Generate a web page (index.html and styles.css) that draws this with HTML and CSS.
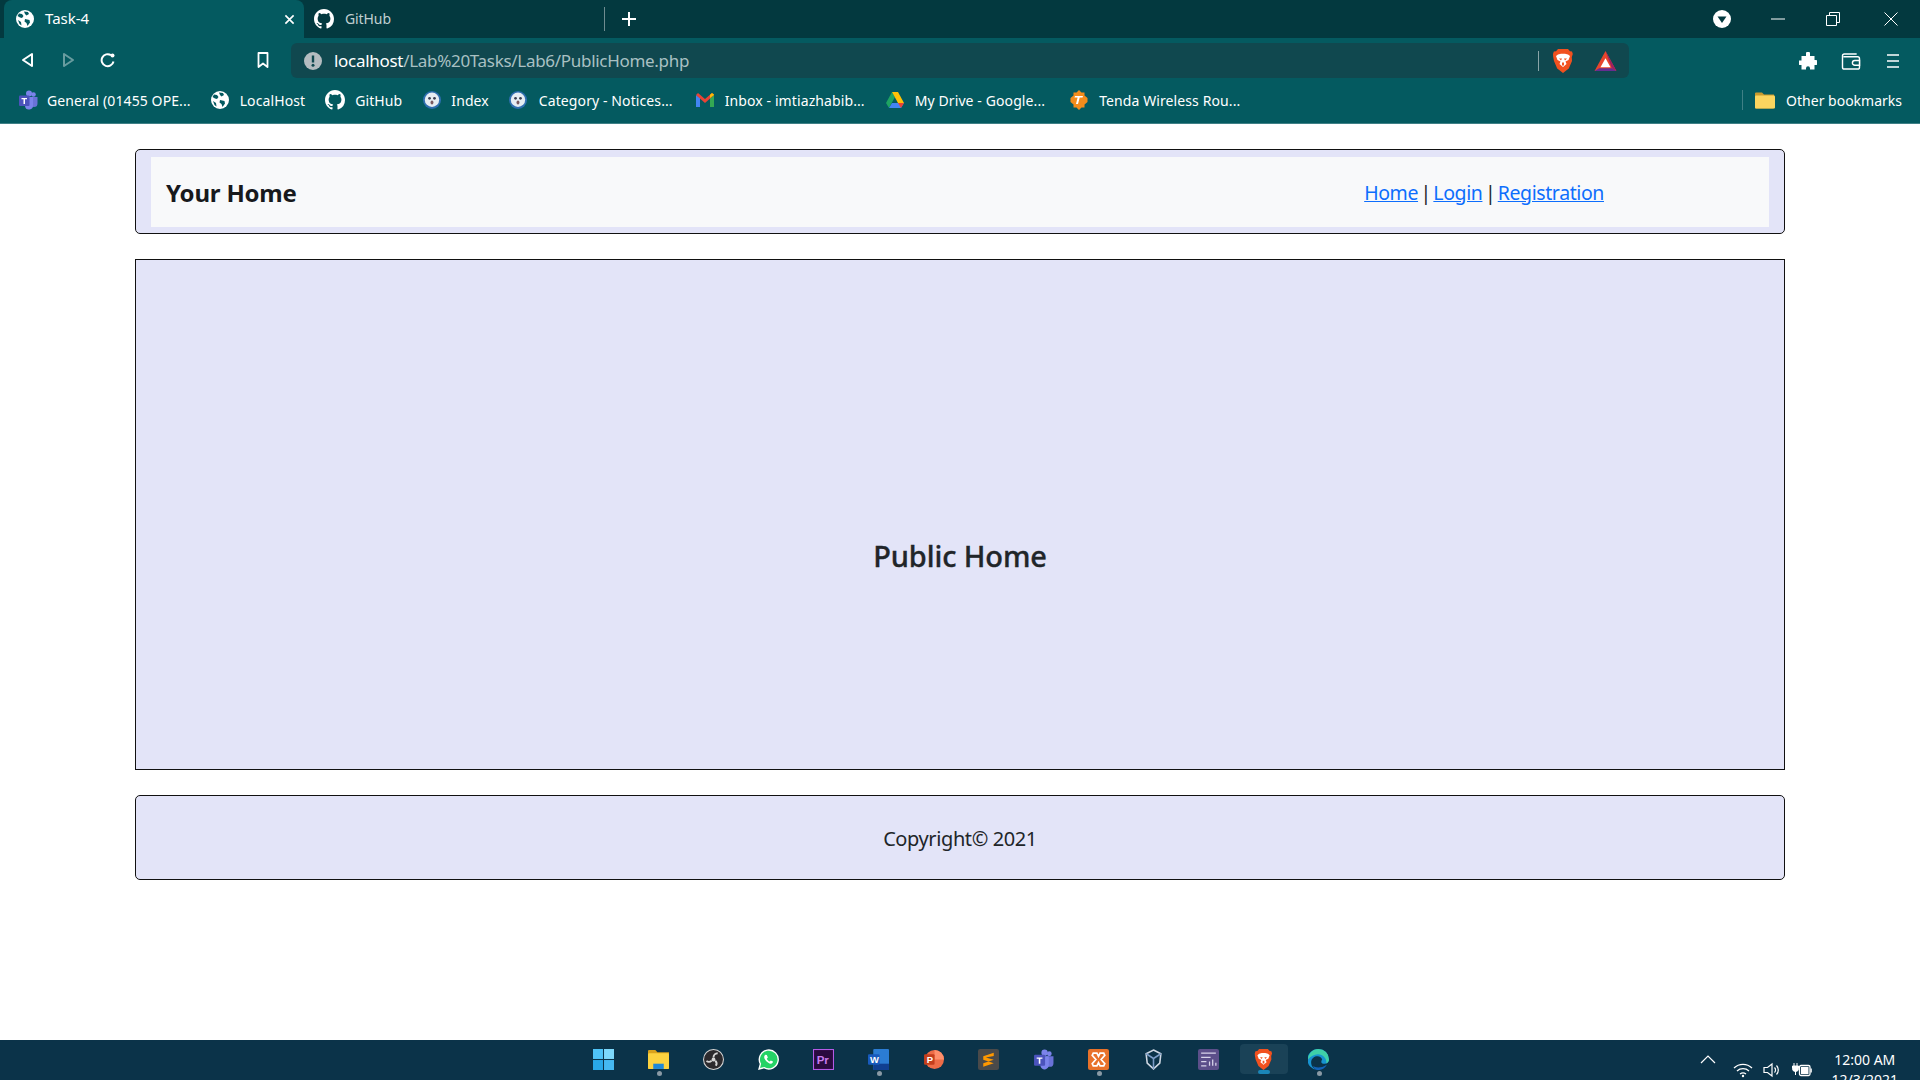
FILE: index.html
```html
<!DOCTYPE html>
<html lang="en">
<head>
  <meta charset="UTF-8" />
  <title>Task-4</title>
  <link rel="stylesheet" href="styles.css">
</head>
<body>
  <svg class="defs" width="0" height="0">
    <symbol id="globe" viewBox="0 0 18 18">
      <circle cx="9" cy="9" r="9" fill="#fff"/>
      <path d="M3 3.500l3 .5 1.500 2L6 8 4 7.500 1.500 6zM8 1.500l4 .5 1 2-2.500 1.500L9 4zM9 9l4.500 1 .5 2.500-2.500 3.500-1-3-2-1.500zM2 10l3 2 .5 3.500-2-1.500z" fill="#045a60"/>
    </symbol>
    <symbol id="github" viewBox="0 0 16 16">
      <path fill="#fff" d="M8 0C3.580 0 0 3.580 0 8c0 3.540 2.290 6.530 5.470 7.590.4.070.55-.17.55-.38 0-.19-.01-.82-.01-1.490-2.010.37-2.530-.49-2.690-.94-.09-.23-.48-.94-.82-1.130-.28-.15-.68-.52-.01-.53.63-.01 1.080.58 1.230.82.720 1.210 1.870.87 2.330.66.070-.52.280-.87.510-1.070-1.780-.2-3.640-.89-3.640-3.950 0-.87.310-1.590.820-2.150-.08-.2-.36-1.020.08-2.120 0 0 .67-.21 2.200.82.640-.18 1.320-.27 2-.27s1.360.09 2 .27c1.530-1.040 2.200-.82 2.200-.82.440 1.100.160 1.920.080 2.120.51.560.82 1.270.82 2.150 0 3.070-1.870 3.750-3.650 3.950.29.250.54.730.54 1.480 0 1.070-.01 1.930-.01 2.200 0 .21.150.46.550.38A8.010 8.010 0 0 0 16 8c0-4.420-3.580-8-8-8z"/>
    </symbol>
    <symbol id="ghost" viewBox="0 0 16 16">
      <circle cx="8" cy="8" r="8" fill="#2f6fb0"/>
      <circle cx="8" cy="7.800" r="6.400" fill="#e6edf2"/>
      <circle cx="5.800" cy="6.500" r="1.200" fill="#3a3f50"/><circle cx="10.200" cy="6.500" r="1.200" fill="#3a3f50"/>
      <ellipse cx="8" cy="10.300" rx="1.300" ry="1.800" fill="#7a5a60"/>
    </symbol>
    <symbol id="teams" viewBox="0 0 20 20">
      <circle cx="15.500" cy="4.500" r="2.300" fill="#7b83eb"/>
      <circle cx="11" cy="3.500" r="3" fill="#7b83eb"/>
      <path d="M12 7h7.500v6.500a3.500 3.500 0 0 1-7 0z" fill="#6a72d8"/>
      <path d="M6 7h9v8a4 4 0 0 1-8 1z" fill="#7b83eb"/>
      <rect x="1" y="5.500" width="10.500" height="10.500" rx="1" fill="#4b53bc"/>
      <path d="M3.500 8h5.500v1.300H7v4.700H5.500V9.300h-2z" fill="#fff"/>
    </symbol>
    <symbol id="brave" viewBox="0 0 20 24">
      <path d="M5 0h10l2 2.200 2 .3.800 2.500-1 3L19 12l-3.200 7.500L10 24l-5.800-4.500L1 12 .2 8 0 5l.8-2.500 2.200-.3z" fill="#f1511f"/>
      <path d="M5 5.500l3-.8h4l3 .8 2 1.500-1.500 4-3 1.500 1 2.500-3.500 3-3.500-3 1-2.500-3-1.500L3 7z" fill="#fff"/>
      <path d="M6 9.500h3l-1 2zM11 9.500h3l-2 2zM9 13.500h2v3H9z" fill="#f1511f"/>
    </symbol>
  </svg>

  <div class="tabstrip">
    <div class="tab tab-active">
      <svg class="ico18"><use href="#globe"/></svg>
      <span class="tab-title">Task-4</span>
      <svg class="tab-close" viewBox="0 0 12 12"><path d="M1.500 1.500l9 9M10.500 1.500l-9 9" stroke="#fff" stroke-width="1.800"/></svg>
    </div>
    <div class="tab">
      <svg class="ico20"><use href="#github"/></svg>
      <span class="tab-title tab-dim">GitHub</span>
    </div>
    <div class="tab-sep"></div>
    <svg class="tab-new" viewBox="0 0 16 16"><path d="M8 1v14M1 8h14" stroke="#fff" stroke-width="2"/></svg>
    <div class="win-controls">
      <svg class="win-drop" viewBox="0 0 18 18"><circle cx="9" cy="9" r="9" fill="#fff"/><path d="M4.500 6.500h9L9 13z" fill="#03393f"/></svg>
      <svg class="win-btn" viewBox="0 0 14 14"><path d="M0 7h14" stroke="#fff"/></svg>
      <svg class="win-btn" viewBox="0 0 14 14"><path d="M.5 3.500h10v10H.5zM3.500 3.500V.5h10v10h-3" stroke="#fff" fill="none"/></svg>
      <svg class="win-btn" viewBox="0 0 14 14"><path d="M.5.5l13 13M13.500.5l-13 13" stroke="#fff"/></svg>
    </div>
  </div>

  <div class="toolbar">
    <svg class="nav-btn" viewBox="0 0 16 16"><path d="M12 2v12L3 8z" fill="none" stroke="#fff" stroke-width="2" stroke-linejoin="round"/></svg>
    <svg class="nav-btn nav-off" viewBox="0 0 16 16"><path d="M4 2v12l9-6z" fill="none" stroke="#fff" stroke-width="2" stroke-linejoin="round"/></svg>
    <svg class="nav-btn" viewBox="0 0 16 16"><path d="M13.500 9.500A6 6 0 1 1 11 3.200" fill="none" stroke="#fff" stroke-width="2"/><circle cx="12.500" cy="3.500" r="2" fill="#fff"/></svg>
    <svg class="nav-mark" viewBox="0 0 12 16"><path d="M1.500 1h9v14L6 11.500 1.500 15z" fill="none" stroke="#fff" stroke-width="1.800" stroke-linejoin="round"/></svg>
    <div class="omnibox">
      <svg class="ico18 info" viewBox="0 0 18 18"><circle cx="9" cy="9" r="9" fill="#b4bcc0"/><path d="M9 3.500v7" stroke="#10484f" stroke-width="2.400"/><circle cx="9" cy="13.300" r="1.500" fill="#10484f"/></svg>
      <span class="url"><span class="url-host">localhost</span>/Lab%20Tasks/Lab6/PublicHome.php</span>
      <div class="omni-sep"></div>
      <svg class="omni-brave"><use href="#brave"/></svg>
      <svg class="omni-bat" viewBox="0 0 24 22"><path d="M12 0l12 22H0z" fill="#e8452c"/><path d="M12 0l12 22-5-3z" fill="#9e1f63"/><path d="M0 22l5-3h14l5 3z" fill="#662d91"/><path d="M12 8l5.500 10h-11z" fill="#fff"/></svg>
    </div>
    <svg class="tool-ext" viewBox="0 0 18 18"><path d="M7 1.500a2 2 0 0 1 4 0V4h4.500v4h1a2.400 2.400 0 0 1 0 5h-1v4.500H11v-1.300a2 2 0 0 0-4 0v1.300H2.500V13H1.200a2.300 2.300 0 0 1 0-4.600h1.300V4H7z" fill="#fff"/></svg>
    <svg class="tool-wallet" viewBox="0 0 20 18"><path d="M16 1H3a2 2 0 0 0-2 2v12a2 2 0 0 0 2 2h14a2 2 0 0 0 2-2V6a2 2 0 0 0-2-2H2" fill="none" stroke="#fff" stroke-width="1.500"/><path d="M19 8h-5a2 2 0 0 0 0 5h5z" fill="#045a60" stroke="#fff" stroke-width="1.500"/></svg>
    <svg class="tool-menu" viewBox="0 0 12 16"><path d="M0 2h12M0 8h12M0 14h12" stroke="#fff" stroke-width="1.600"/></svg>
  </div>

  <div class="bookmarks">
    <a class="bm bm-teams"><svg class="ico20"><use href="#teams"/></svg>General (01455 OPE...</a>
    <a class="bm bm-host"><svg class="ico18"><use href="#globe"/></svg>LocalHost</a>
    <a class="bm bm-git"><svg class="ico20"><use href="#github"/></svg>GitHub</a>
    <a class="bm bm-index"><svg class="ico18"><use href="#ghost"/></svg>Index</a>
    <a class="bm bm-cat"><svg class="ico18"><use href="#ghost"/></svg>Category - Notices...</a>
    <a class="bm bm-mail"><svg class="ico18" viewBox="0 0 18 14"><path d="M0 2v12h4V5z" fill="#4285f4"/><path d="M14 5v9h4V2z" fill="#34a853"/><path d="M0 2l2-2 7 6 7-6 2 2-9 8z" fill="#ea4335"/><path d="M14 5l4-3v-.5L16 0l-2 1.700z" fill="#fbbc04"/></svg>Inbox - imtiazhabib...</a>
    <a class="bm bm-drive"><svg class="ico18" viewBox="0 0 18 16"><path d="M6 0L0 11l3 5 6-11z" fill="#1ea362"/><path d="M6 0h6l6 11h-6z" fill="#ffc107"/><path d="M3 16l3-5h12l-3 5z" fill="#4285f4"/><path d="M12 11h6l-3 5z" fill="#ea4335"/></svg>My Drive - Google...</a>
    <a class="bm bm-tenda"><svg class="ico20" viewBox="0 0 20 20"><path d="M10 0l2.500 2.500h3v3L18.500 8v4l-3 2.500v3h-3L10 20l-2.500-2.500h-3v-3L1.500 12V8l3-2.500v-3h3z" fill="#f28c1c"/><path d="M6 6h8l-.5 1.500h-2.800L9 14H7l1.600-6.500H5.500z" fill="#fff"/></svg>Tenda Wireless Rou...</a>
    <div class="bm-sep"></div>
    <a class="bm bm-other"><svg class="ico20" viewBox="0 0 20 17"><path d="M0 2a1 1 0 0 1 1-1h6l2 2h10v13a1 1 0 0 1-1 1H1a1 1 0 0 1-1-1z" fill="#c99a2e"/><rect y="4" width="20" height="13" rx="1" fill="#fbd55f"/></svg>Other bookmarks</a>
  </div>

  <div class="page">
    <div class="box head-box">
      <div class="head-inner">
        <span class="brand">Your Home</span>
        <span class="links"><a href="#">Home</a> | <a href="#">Login</a> | <a href="#">Registration</a></span>
      </div>
    </div>
    <div class="main-box">
      <h2>Public Home</h2>
    </div>
    <div class="box foot-box">Copyright© 2021</div>
  </div>

  <div class="taskbar">
    <div class="tb-icons">
      <div class="tb-item"><svg class="tb-ico" viewBox="0 0 20 20"><rect width="9.500" height="9.500" fill="#4fc3f7"/><rect x="10.500" width="9.500" height="9.500" fill="#7dd8fb"/><rect y="10.500" width="9.500" height="9.500" fill="#29a8e8"/><rect x="10.500" y="10.500" width="9.500" height="9.500" fill="#45b9f2"/></svg></div>
      <div class="tb-item tb-open"><svg class="tb-ico" viewBox="0 0 20 20"><path d="M0 2a1 1 0 0 1 1-1h6l2 2h11v15a1 1 0 0 1-1 1H1a1 1 0 0 1-1-1z" fill="#d9a21c"/><rect y="4" width="20" height="15" rx="1" fill="#fcd23f"/><rect x="5" y="14" width="10" height="5" fill="#1e88d8"/></svg></div>
      <div class="tb-item"><svg class="tb-ico" viewBox="0 0 20 20"><circle cx="10" cy="10" r="9.500" fill="#2c2a2d" stroke="#d5d5d5"/><circle cx="10" cy="10" r="1.800" fill="#d5d5d5"/><path d="M10 8a4 4 0 0 1 4-4M11.700 11a4 4 0 0 1 .5 5M8.300 11a4 4 0 0 1-5 .5" fill="none" stroke="#d5d5d5" stroke-width="1.800"/></svg></div>
      <div class="tb-item"><svg class="tb-ico" viewBox="0 0 20 20"><path d="M1 19l1.300-4.800A9 9 0 1 1 5.800 17.800z" fill="#25d366" stroke="#fff" stroke-width="1.300"/><path d="M7 5.500c-1.500 1-1.500 3 0 5s4 3.800 5.500 3.500 2-1.700 1.700-2l-2-1-1 1c-1.200-.5-2.300-1.600-2.800-2.800l1-1-1-2.500z" fill="#fff"/></svg></div>
      <div class="tb-item"><svg class="tb-ico" viewBox="0 0 20 20"><rect x=".5" y=".5" width="19" height="19" fill="#2a0a3f" stroke="#b45be6"/><text x="3.500" y="14.500" class="tb-pr">Pr</text></svg></div>
      <div class="tb-item tb-open"><svg class="tb-ico" viewBox="0 0 20 20"><rect x="5" y="0" width="15" height="20" rx="1" fill="#2b7cd3"/><rect x="5" y="14" width="15" height="6" fill="#103f91"/><rect x="0" y="5" width="11" height="10" rx="1" fill="#185abd"/><text x="2" y="13.500" class="tb-let">W</text></svg></div>
      <div class="tb-item"><svg class="tb-ico" viewBox="0 0 20 20"><circle cx="11" cy="10" r="9" fill="#ed6c47"/><path d="M11 1a9 9 0 0 1 9 9h-9z" fill="#ff8f6b"/><rect x="1" y="5" width="10" height="10" rx="1" fill="#c43e1c"/><text x="3.500" y="13.500" class="tb-let">P</text></svg></div>
      <div class="tb-item"><svg class="tb-ico" viewBox="0 0 20 20"><rect width="20" height="20" rx="2" fill="#4a4a4a"/><path d="M15 3.500L5 6.800v3.500l10 3.200v-3.300L7.500 8 15 6.700zM5 13.500l10-3.300v3.300L5 16.800z" fill="#ff9800"/></svg></div>
      <div class="tb-item"><svg class="tb-ico"><use href="#teams"/></svg></div>
      <div class="tb-item tb-open"><svg class="tb-ico" viewBox="0 0 20 20"><rect width="20" height="20" rx="2" fill="#e8722a"/><path d="M5 4h3.500L10 7l1.500-3H15l1 2-3.500 4 3.500 4-1 2h-3.500L10 13l-1.500 3H5l-1-2 3.500-4L4 6z" fill="none" stroke="#fff" stroke-width="1.600"/></svg></div>
      <div class="tb-item"><svg class="tb-ico" viewBox="0 0 20 20"><path d="M10 1l7 3.500-1 9-6 5.500-6-5.500-1-9z" fill="none" stroke="#cfd8e3" stroke-width="1.500"/><path d="M3 4.500L10 9l7-4.500M10 9v10" fill="none" stroke="#7b9cc7" stroke-width="1.500"/></svg></div>
      <div class="tb-item"><svg class="tb-ico" viewBox="0 0 20 20"><rect width="20" height="20" rx="2" fill="#5c4f8a"/><path d="M3 4h14M3 8h9M3 12h5M11 16v-4M14 16v-6M17 16v-3M3 16h5" stroke="#d8d4ea" stroke-width="1.200"/></svg></div>
      <div class="tb-item tb-active"><svg class="tb-ico"><use href="#brave"/></svg></div>
      <div class="tb-item tb-open"><svg class="tb-ico" viewBox="0 0 20 20"><path d="M10 0a10 10 0 0 1 10 10c0 3-3 4.500-5.500 4-2.500-.5-2-3-1-3.800-.5-2.500-3-3.700-5.500-3.200-3 .6-5 3-5 6 0 3.500 3 6.500 6 7A10 10 0 0 1 10 0z" fill="#1793d1"/><path d="M10 0a10 10 0 0 1 10 10c0 1.500-1 3-2.500 3.700C18 9 14 5 9.500 5 6 5 2.500 7 0 10 0 4.500 4.500 0 10 0z" fill="#3fd0a8"/><path d="M18 15a10 10 0 0 1-9.500 5c-2-.3-3.500-2-3.500-4 1.500 1.700 6.500 3 13-1z" fill="#1363b8"/></svg></div>
    </div>
    <div class="tray">
      <svg class="tray-caret" viewBox="0 0 16 9"><path d="M1 8l7-7 7 7" fill="none" stroke="#fff" stroke-width="1.200"/></svg>
      <svg class="tray-ico tray-wifi" viewBox="0 0 20 14"><path d="M1 5a13 13 0 0 1 18 0M4 8a9 9 0 0 1 12 0M7 11a5 5 0 0 1 6 0" fill="none" stroke="#fff" stroke-width="1.300"/><circle cx="10" cy="13" r="1.200" fill="#fff"/></svg>
      <svg class="tray-ico" viewBox="0 0 20 16"><path d="M1 5.500h3.500L9 2v12l-4.500-3.500H1z" fill="none" stroke="#fff" stroke-width="1.200"/><path d="M11.500 5.500a3.500 3.500 0 0 1 0 5M13.500 3.500a6.500 6.500 0 0 1 0 9" fill="none" stroke="#fff" stroke-width="1.200"/></svg>
      <svg class="tray-ico" viewBox="0 0 20 16"><path d="M2 1v3M5 1v3M0.500 4h6v2.500a3 3 0 0 1-6 0zM3.500 9v4" stroke="#fff" fill="#fff"/><rect x="7.500" y="3.500" width="10.500" height="10" rx="1.500" fill="none" stroke="#fff" stroke-width="1.300"/><rect x="9" y="5" width="7.500" height="7" fill="#fff"/><rect x="18.500" y="6.500" width="1.300" height="4" fill="#fff"/></svg>
      <div class="clock"><span>12:00 AM</span><span>12/3/2021</span></div>
    </div>
  </div>
</body>
</html>
```

FILE: styles.css
```css
* {
  margin: 0;
  padding: 0;
  box-sizing: border-box;
}
html, body {
  height: 1080px;
  overflow: hidden;
}
body {
  font-family: "Noto Sans", "Open Sans", sans-serif;
  background: #fff;
  color: #212529;
  display: flex;
  flex-direction: column;
}
.defs {
  position: absolute;
}
svg {
  flex: none;
  display: block;
}
.ico18 { width: 18px; height: 18px; }
.ico20 { width: 20px; height: 20px; }

/* tabs */
.tabstrip {
  height: 38px;
  background: #03393f;
  display: flex;
  align-items: center;
  padding-left: 4px;
  color: #fff;
}
.tab {
  width: 300px;
  height: 38px;
  display: flex;
  align-items: center;
  gap: 11px;
  padding-left: 10px;
  font-size: 14px;
}
.tab-active {
  background: #045a60;
  border-radius: 8px 8px 0 0;
  padding-left: 12px;
  gap: 11px;
  font-size: 15px;
}
.tab-title {
  flex: 1;
  line-height: 18px;
  padding-bottom: 2px;
}
.tab-dim {
  color: #c0cfd1;
  letter-spacing: -0.1px;
  padding-bottom: 0;
}
.tab-close {
  width: 11px;
  height: 11px;
  margin-right: 9px;
}
.tab-sep {
  width: 1px;
  height: 24px;
  background: #6f8c90;
}
.tab-new {
  width: 16px;
  height: 16px;
  margin-left: 16px;
}
.win-controls {
  margin-left: auto;
  display: flex;
  align-items: center;
}
.win-drop {
  width: 18px;
  height: 18px;
  margin-right: 40px;
}
.win-btn {
  width: 14px;
  height: 14px;
  margin-right: 41px;
}
.win-btn:nth-child(3) {
  margin-right: 44px;
}
.win-btn:last-child {
  margin-right: 22px;
}

/* toolbar */
.toolbar {
  height: 45px;
  background: #045a60;
  display: flex;
  align-items: flex-start;
  padding: 5px 0 0 20px;
}
.nav-btn {
  width: 16px;
  height: 16px;
  margin: 9px 24px 0 0;
}
.nav-off { opacity: 0.4; }
.nav-mark {
  width: 12px;
  height: 16px;
  margin: 9px 22px 0 117px;
}
.omnibox {
  width: 1338px;
  height: 35px;
  background: #10484f;
  border-radius: 6px;
  display: flex;
  align-items: center;
  padding-left: 13px;
  font-size: 17px;
}
.info { margin-right: 12px; }
.url {
  color: #a9c0c3;
  letter-spacing: -0.3px;
  flex: 1;
}
.url-host { color: #fff; }
.omni-sep {
  width: 1px;
  height: 20px;
  background: #8aa5a8;
}
.omni-brave {
  width: 20px;
  height: 24px;
  margin: 0 21px 0 14px;
}
.omni-bat {
  width: 23px;
  height: 20px;
  margin-right: 12px;
}
.tool-ext {
  width: 18px;
  height: 18px;
  margin: 9px 24px 0 170px;
}
.tool-wallet {
  width: 20px;
  height: 17px;
  margin: 10px 26px 0 0;
}
.tool-menu {
  width: 12px;
  height: 16px;
  margin-top: 10px;
}

/* bookmarks */
.bookmarks {
  height: 41px;
  background: #045a60;
  border-bottom: 1px solid #3f8086;
  padding-bottom: 6px;
  display: flex;
  align-items: center;
  color: #fff;
  font-size: 14px;
  letter-spacing: 0.1px;
  white-space: nowrap;
}
.bm {
  display: flex;
  align-items: center;
  gap: 9px;
}
.bm-teams { margin-left: 18px; }
.bm-host { margin-left: 20px; gap: 11px; }
.bm-git { margin-left: 20px; gap: 10px; }
.bm-index { margin-left: 21px; gap: 10px; }
.bm-cat { margin-left: 20px; gap: 12px; }
.bm-mail { margin-left: 23px; gap: 11px; }
.bm-drive { margin-left: 21px; gap: 11px; }
.bm-tenda { margin-left: 24px; gap: 10px; }
.bm-sep {
  width: 1px;
  height: 20px;
  background: #3f8086;
  margin-left: auto;
}
.bm-other {
  margin: 0 18px 0 12px;
  gap: 11px;
  letter-spacing: 0;
}

/* page */
.page {
  flex: 1;
  padding: 25px 135px 0;
  display: flex;
  flex-direction: column;
}
.box {
  height: 85px;
  flex: none;
  background: #e3e4f8;
  border: 1px solid #111;
  border-radius: 5px;
}
.head-box {
  padding: 7px 15px 6px;
}
.head-inner {
  height: 100%;
  background: #f8f9fa;
  display: flex;
  align-items: center;
  padding-left: 15px;
}
.brand {
  font-size: 24px;
  font-weight: 700;
  letter-spacing: -0.2px;
  color: #17191c;
}
.links {
  margin-left: auto;
  margin-right: 165px;
  font-size: 19.5px;
  letter-spacing: -0.4px;
  word-spacing: -2.2px;
}
.links a { color: #0d6efd; }
.main-box {
  height: 511px;
  flex: none;
  margin: 25px 0;
  background: #e3e4f8;
  border: 1px solid #111;
  display: flex;
  align-items: center;
  justify-content: center;
  padding-top: 82px;
}
.main-box h2 {
  font-size: 29px;
  font-weight: 500;
  letter-spacing: -0.1px;
  -webkit-text-stroke: 0.35px #212529;
}
.foot-box {
  display: flex;
  align-items: center;
  justify-content: center;
  font-size: 20px;
  letter-spacing: -0.4px;
  padding-top: 2px;
}

/* taskbar */
.taskbar {
  height: 40px;
  background: #0b3349;
  display: flex;
  color: #fff;
}
.tb-icons {
  display: flex;
  margin-left: 576px;
}
.tb-item {
  width: 48px;
  height: 30px;
  margin: 4px 3.5px 0;
  border-radius: 4px;
  display: flex;
  align-items: center;
  justify-content: center;
  position: relative;
}
.tb-ico {
  width: 21px;
  height: 21px;
}
.tb-open::after {
  content: "";
  position: absolute;
  left: 22px;
  bottom: -2px;
  width: 5px;
  height: 5px;
  border-radius: 50%;
  background: #8a9aa5;
}
.tb-active {
  background: #1a4257;
}
.tb-active::after {
  content: "";
  position: absolute;
  left: 18px;
  bottom: 0;
  width: 12px;
  height: 4px;
  border-radius: 2px;
  background: #1a86b8;
}
.tb-pr {
  font: 700 11px "Liberation Sans", sans-serif;
  fill: #c77cf0;
}
.tb-let {
  font: 700 9px "Liberation Sans", sans-serif;
  fill: #fff;
}
.tray {
  margin-left: auto;
  display: flex;
  align-items: center;
  height: 40px;
}
.tray-caret {
  width: 16px;
  height: 9px;
  margin: 0 17px 2px 0;
}
.tray-ico {
  width: 20px;
  height: 16px;
  margin: 20px 9px 0 0;
}
.tray-wifi {
  margin-right: 10px;
}
.clock {
  display: flex;
  flex-direction: column;
  align-items: center;
  font-size: 14px;
  line-height: 20px;
  margin: 0 22px 0 11px;
  padding-top: 21px;
  height: 62px;
}
```
